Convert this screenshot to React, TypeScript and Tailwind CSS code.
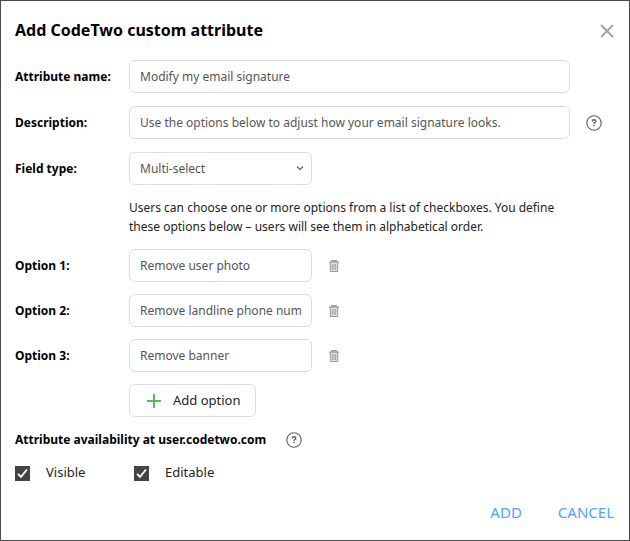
import { useState } from "react";
import type { ReactNode } from "react";

const inputStyle =
  "h-[33px] rounded-md border border-[#dcdcdc] bg-white px-[10px] text-xs text-[#555555] outline-none focus:border-[#4da3ff]";

function HelpIcon() {
  return (
    <svg className="w-4 h-4 text-[#606060]" viewBox="0 0 16 16" fill="none" stroke="currentColor">
      <circle cx="8" cy="8" r="7.2" strokeWidth={1.1} />
      <path strokeWidth={1.4} d="M6.2 6.4C6.2 5.2 7 4.8 8 4.8S9.8 5.3 9.8 6.3C9.8 7.4 8 7.4 8 9" />
      <path strokeWidth={1.5} d="M8 9.9v1.4" />
    </svg>
  );
}

function TrashIcon() {
  return (
    <svg className="w-[10px] h-3" viewBox="0 0 10 12" fill="none" stroke="#989898">
      <path fill="#e4e4e4" d="M1.3 2.5v9h7.4v-9" />
      <path strokeWidth={1.2} d="M0 2.2h10M2.8 2V0.6h4.4V2" />
      <path strokeWidth={0.9} d="M3.3 4v6M5 4v6M6.7 4v6" />
    </svg>
  );
}

function Row({ label, htmlFor, children }: { label?: string; htmlFor?: string; children: ReactNode }) {
  return (
    <div className="flex items-center">
      <div className="w-[114px] shrink-0">
        {label && (
          <label htmlFor={htmlFor} className="font-bold text-black whitespace-nowrap">
            {label}
          </label>
        )}
      </div>
      {children}
    </div>
  );
}

function Checkbox({ label, checked, onChange }: { label: string; checked: boolean; onChange: () => void }) {
  return (
    <label className="flex items-center gap-4 w-[119px]">
      <span className="grid w-[15px] h-[15px]">
        <input
          type="checkbox"
          checked={checked}
          onChange={onChange}
          className="peer col-start-1 row-start-1 appearance-none w-[15px] h-[15px] border border-[#444444] checked:bg-[#444444]"
        />
        <svg
          className="col-start-1 row-start-1 w-[15px] h-[15px] pointer-events-none invisible peer-checked:visible"
          viewBox="0 0 15 15"
          fill="none"
          stroke="white"
        >
          <path strokeWidth={1.8} d="M3 7.8l3 3 6-7.3" />
        </svg>
      </span>
      {label}
    </label>
  );
}

export default function App() {
  const [name, setName] = useState("Modify my email signature");
  const [description, setDescription] = useState("Use the options below to adjust how your email signature looks.");
  const [options, setOptions] = useState(["Remove user photo", "Remove landline phone number", "Remove banner"]);
  const [visible, setVisible] = useState(true);
  const [editable, setEditable] = useState(true);

  const updateOption = (index: number, value: string) => {
    setOptions(options.map((option, i) => (i === index ? value : option)));
  };

  return (
    <div className="min-h-screen flex flex-col border border-[#4a4a4a] bg-white pl-[14px] pr-[15px] font-['Noto_Sans',sans-serif] text-xs text-[#222222]">
      {/* Header */}
      <div className="flex items-center justify-between h-[59px]">
        <h1 className="text-[16px] font-bold text-black">Add CodeTwo custom attribute</h1>
        <button type="button" aria-label="Close">
          <svg className="w-[14px] h-[14px]" viewBox="0 0 14 14" fill="none" stroke="#a0a0a0">
            <path strokeWidth={1.8} d="M1 1l12 12M13 1L1 13" />
          </svg>
        </button>
      </div>

      <div className="flex flex-col gap-[13px]">
        <Row label="Attribute name:" htmlFor="name">
          <input id="name" value={name} onChange={(e) => setName(e.target.value)} className={`${inputStyle} flex-1 min-w-0`} />
          <div className="w-11" />
        </Row>

        <Row label="Description:" htmlFor="description">
          <input
            id="description"
            value={description}
            onChange={(e) => setDescription(e.target.value)}
            className={`${inputStyle} flex-1 min-w-0`}
          />
          <div className="w-11 pl-4">
            <button type="button" aria-label="Help" className="block">
              <HelpIcon />
            </button>
          </div>
        </Row>

        <Row label="Field type:" htmlFor="type">
          <div className="relative">
            <select id="type" className={`${inputStyle} appearance-none w-[183px]`}>
              <option>Multi-select</option>
            </select>
            <svg
              className="absolute right-2 top-3 w-2 h-2 pointer-events-none"
              viewBox="0 0 8 8"
              fill="none"
              stroke="#707070"
            >
              <path strokeWidth={1.5} d="M1 2.5l3 3 3-3" />
            </svg>
          </div>
        </Row>

        <Row>
          <p className="flex-1 mr-11 leading-[19px]">
            Users can choose one or more options from a list of checkboxes. You define these options below – users will
            see them in alphabetical order.
          </p>
        </Row>
      </div>

      {/* Options */}
      <div className="flex flex-col gap-3 mt-[13px]">
        {options.map((option, i) => (
          <Row key={i} label={`Option ${i + 1}:`} htmlFor={`option-${i}`}>
            <input
              id={`option-${i}`}
              value={option}
              onChange={(e) => updateOption(i, e.target.value)}
              className={`${inputStyle} w-[183px]`}
            />
            <button
              type="button"
              aria-label="Remove option"
              className="ml-[17px]"
              onClick={() => setOptions(options.filter((_, index) => index !== i))}
            >
              <TrashIcon />
            </button>
          </Row>
        ))}

        <Row>
          <button
            type="button"
            onClick={() => setOptions([...options, ""])}
            className="flex items-center gap-3 h-[33px] w-[127px] pl-[17px] rounded-md border border-[#dcdcdc] text-[13px]"
          >
            <svg className="w-[14px] h-[14px]" viewBox="0 0 14 14" fill="none" stroke="#5cb85c">
              <path strokeWidth={2} d="M7 0v14M0 7h14" />
            </svg>
            Add option
          </button>
        </Row>
      </div>

      {/* Availability */}
      <div className="flex items-center gap-5 mt-3 h-[22px]">
        <h2 className="font-bold text-black">Attribute availability at user.codetwo.com</h2>
        <button type="button" aria-label="Help">
          <HelpIcon />
        </button>
      </div>
      <div className="flex mt-3 h-5 text-[13px]">
        <Checkbox label="Visible" checked={visible} onChange={() => setVisible(!visible)} />
        <Checkbox label="Editable" checked={editable} onChange={() => setEditable(!editable)} />
      </div>

      {/* Footer */}
      <div className="flex justify-end gap-9 mt-auto pb-[18px] text-[15px] text-[#4da3ff]">
        <button type="button">ADD</button>
        <button type="button">CANCEL</button>
      </div>
    </div>
  );
}
